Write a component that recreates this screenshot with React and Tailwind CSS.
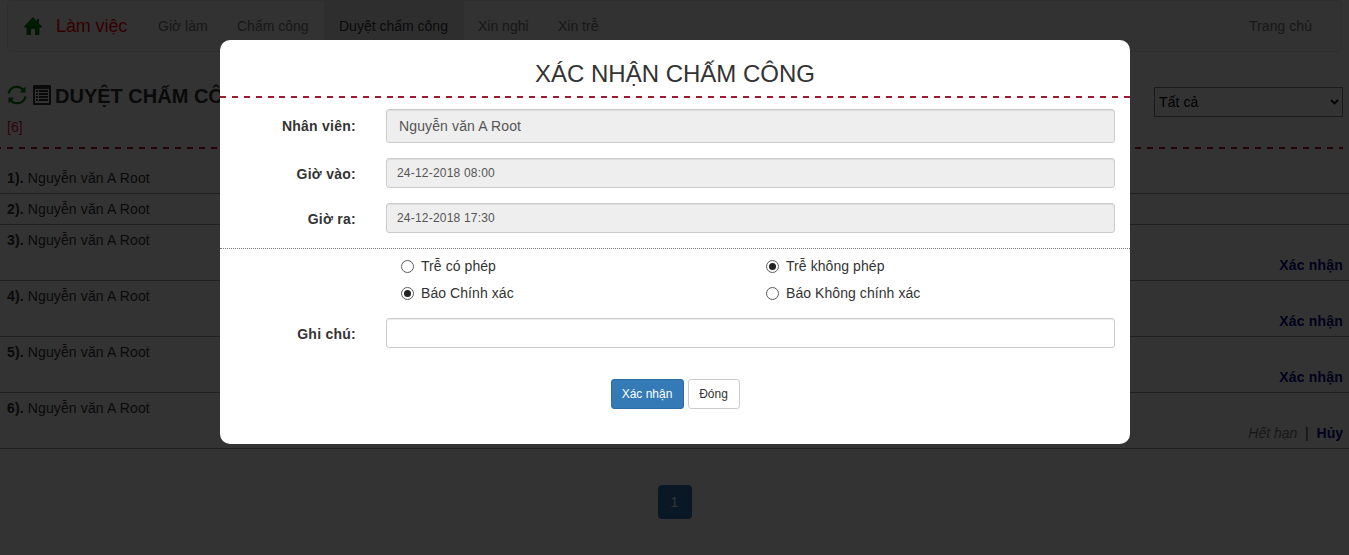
import React from "react";

const rows = [
  { n: 1, h: "h-[31px]" },
  { n: 2, h: "h-[31px]" },
  { n: 3, h: "h-[56px]", action: true },
  { n: 4, h: "h-[56px]", action: true },
  { n: 5, h: "h-[56px]", action: true },
  { n: 6, h: "h-[56px]", expired: true },
];

const HomeIcon = () => (
  <svg className="h-[18px] w-5" viewBox="0 0 20 18" fill="#008000">
    <path d="M10 0 L19 9.500 Q19 10.500 18 10.500 H16.500 V17 Q16.500 18 15.500 18 H12 V12 H8 V18 H4.500 Q3.500 18 3.500 17 V10.500 H2 Q1 10.500 1 9.500 Z M14 2 H16 V7 L14 5 Z" />
  </svg>
);

const RefreshIcon = () => (
  <svg className="h-5 w-5" viewBox="0 0 20 20" fill="none" stroke="#008000" strokeWidth="2.200">
    <path d="M1.500 8.500 C2.500 4.500 5.500 1.800 9.500 1.800 C12.500 1.800 15 3 16.500 5.200" />
    <path d="M18.500 11.500 C17.500 15.500 14.500 18.200 10.500 18.200 C7.500 18.200 5 17 3.500 14.800" />
    <path d="M18.500 1.500 V7.500 H12.500 Z M1.500 18.500 V12.500 H7.500 Z" fill="#008000" stroke="none" />
  </svg>
);

const ListIcon = () => (
  <svg className="h-5 w-[18px]" viewBox="0 0 18 20" fill="#333">
    <path fillRule="evenodd" d="M1 0 H17 Q18 0 18 1 V19 Q18 20 17 20 H1 Q0 20 0 19 V1 Q0 0 1 0 Z M2 4 V18 H16 V4 Z" />
    <path d="M3 5h2v2H3z M6 5h9v2H6z M3 8h2v2H3z M6 8h9v2H6z M3 11h2v2H3z M6 11h9v2H6z M3 14h2v2H3z M6 14h9v2H6z" />
  </svg>
);

function Radio({ on, children }) {
  return (
    <label className="flex h-[27px] flex-1 items-center gap-[7px]">
      <span className="flex size-[13px] shrink-0 items-center justify-center rounded-full border border-[#5c5c5c] bg-white">
        {on && <span className="size-[7px] rounded-full bg-[#222]" />}
      </span>
      <span className="pb-[2px] tracking-[0.07px]">{children}</span>
    </label>
  );
}

function Field({ label, low, children }) {
  return (
    <div className="flex items-center">
      <span className={`w-[136px] text-right font-bold tracking-[0.25px] ${low ? "pt-[2px]" : ""}`}>{label}</span>
      <div className="ml-[30px] w-[729px]">{children}</div>
    </div>
  );
}

function Page() {
  return (
    <div className="h-full overflow-hidden">
      <nav className="mx-[7px] flex h-[52px] items-center rounded border border-[#e7e7e7] bg-[#f8f8f8] text-[#777]">
        <span className="ml-[15px] w-5"><HomeIcon /></span>
        <span className="ml-[13px] w-[72px] text-lg tracking-[-0.1px] whitespace-nowrap text-[#f00]">Làm việc</span>
        <span className="ml-[30px] w-[49px] whitespace-nowrap">Giờ làm</span>
        <span className="ml-[30px] w-[72px] whitespace-nowrap">Chấm công</span>
        <span className="ml-[15px] flex h-[50px] w-[140px] items-center bg-[#e7e7e7] pl-[15px] whitespace-nowrap text-[#333]">Duyệt chấm công</span>
        <span className="ml-[14px] w-[51px] whitespace-nowrap">Xin nghỉ</span>
        <span className="ml-[29px]">Xin trễ</span>
        <span className="mr-[29px] ml-auto tracking-[0.05px]">Trang chủ</span>
      </nav>
      <div className="mt-[32px] flex h-[63px] justify-between pr-[6px] pl-[7px]">
        <div>
          <div className="flex h-[22px] items-center">
            <RefreshIcon />
            <span className="mr-1 ml-[6px]"><ListIcon /></span>
            <span className="pt-[2px] text-xl leading-[22px] font-bold whitespace-nowrap text-[#333]">DUYỆT CHẤM CÔNG</span>
          </div>
          <div className="mt-[11px] leading-5 text-[#dc143c]">[6]</div>
        </div>
        <div className="mt-[3px] flex h-[30px] w-[189px] items-center justify-between border border-[#888] pr-[3px] pl-[4px] text-black">
          <span className="tracking-[0.1px]">Tất cả</span>
          <svg className="h-2 w-[9px]" viewBox="0 0 9 8" fill="none" stroke="#000" strokeWidth="1.800"><path d="M1 2 L4.500 5.500 L8 2" /></svg>
        </div>
      </div>
      <div className="mr-[6px] h-[2px] bg-[repeating-linear-gradient(90deg,#a5142a_0px,#a5142a_6px,transparent_6px,transparent_12px)] bg-size-[12px_2px] bg-position-[7px_0]" />
      <div className="mt-[14px]">
        {rows.map((r) => (
          <div key={r.n} className={`${r.h} flex justify-between border-b border-[#999] pr-[6px] pl-[7px] text-[#333]`}>
            <span className="pt-[5px] tracking-[0.13px]"><b>{r.n}).</b> Nguyễn văn A Root</span>
            {r.action && <b className="self-end pb-[5px] tracking-[0.2px] text-[#00008b]">Xác nhận</b>}
            {r.expired && (
              <span className="self-end pb-[5px] whitespace-pre"><i className="text-[#777]">Hết hạn</i>{"  |  "}<b className="text-[#00008b]">Hủy</b></span>
            )}
          </div>
        ))}
      </div>
      <div className="mx-auto mt-[36px] flex h-[34px] w-[34px] items-center justify-center rounded bg-[#337ab7] text-white">1</div>
    </div>
  );
}

const inputBase = "flex items-center rounded-[3px] border border-[#ccc] text-[#555] shadow-[inset_0_1px_1px_rgba(0,0,0,0.075)]";

export default function App() {
  return (
    <div className="relative h-[555px] w-[1349px] overflow-hidden bg-white font-['Liberation_Sans',Arial,sans-serif] text-sm leading-5 text-[#333]">
      <Page />
      <div className="absolute inset-0 bg-black/80 pt-10 pl-[220px]">
        <div className="h-[404px] w-[910px] rounded-[10px] bg-white">
          <h1 className="h-[56px] pt-[20px] text-center text-2xl leading-7">XÁC NHẬN CHẤM CÔNG</h1>
          <div className="h-[2px] bg-[repeating-linear-gradient(90deg,#9b1c31_0px,#9b1c31_6px,transparent_6px,transparent_11.893px)]" />
          <div className="mt-[11px] flex flex-col gap-[15px]">
            <Field label="Nhân viên:">
              <div className={`${inputBase} h-[34px] bg-[#eee] px-3 tracking-[0.13px]`}>Nguyễn văn A Root</div>
            </Field>
            <Field label="Giờ vào:" low>
              <div className={`${inputBase} h-[30px] bg-[#eee] px-[10px] text-xs tracking-[0.2px]`}>24-12-2018 08:00</div>
            </Field>
            <Field label="Giờ ra:" low>
              <div className={`${inputBase} h-[30px] bg-[#eee] px-[10px] text-xs tracking-[0.2px]`}>24-12-2018 17:30</div>
            </Field>
          </div>
          <div className="mt-[15px] border-t border-dotted border-[#777] pt-1">
            <div className="ml-[181px] flex w-[730px]">
              <Radio>Trễ có phép</Radio>
              <Radio on>Trễ không phép</Radio>
            </div>
            <div className="mb-[11px] ml-[181px] flex w-[730px]">
              <Radio on>Báo Chính xác</Radio>
              <Radio>Báo Không chính xác</Radio>
            </div>
            <Field label="Ghi chú:" low>
              <div className={`${inputBase} h-[30px] bg-white`} />
            </Field>
          </div>
          <div className="mt-[31px] flex justify-center gap-1 text-xs">
            <button className="h-[30px] w-[73px] rounded-[3px] border border-[#2e6da4] bg-[#337ab7] text-white">Xác nhận</button>
            <button className="h-[30px] w-[52px] rounded-[3px] border border-[#ccc] bg-white">Đóng</button>
          </div>
        </div>
      </div>
    </div>
  );
}
